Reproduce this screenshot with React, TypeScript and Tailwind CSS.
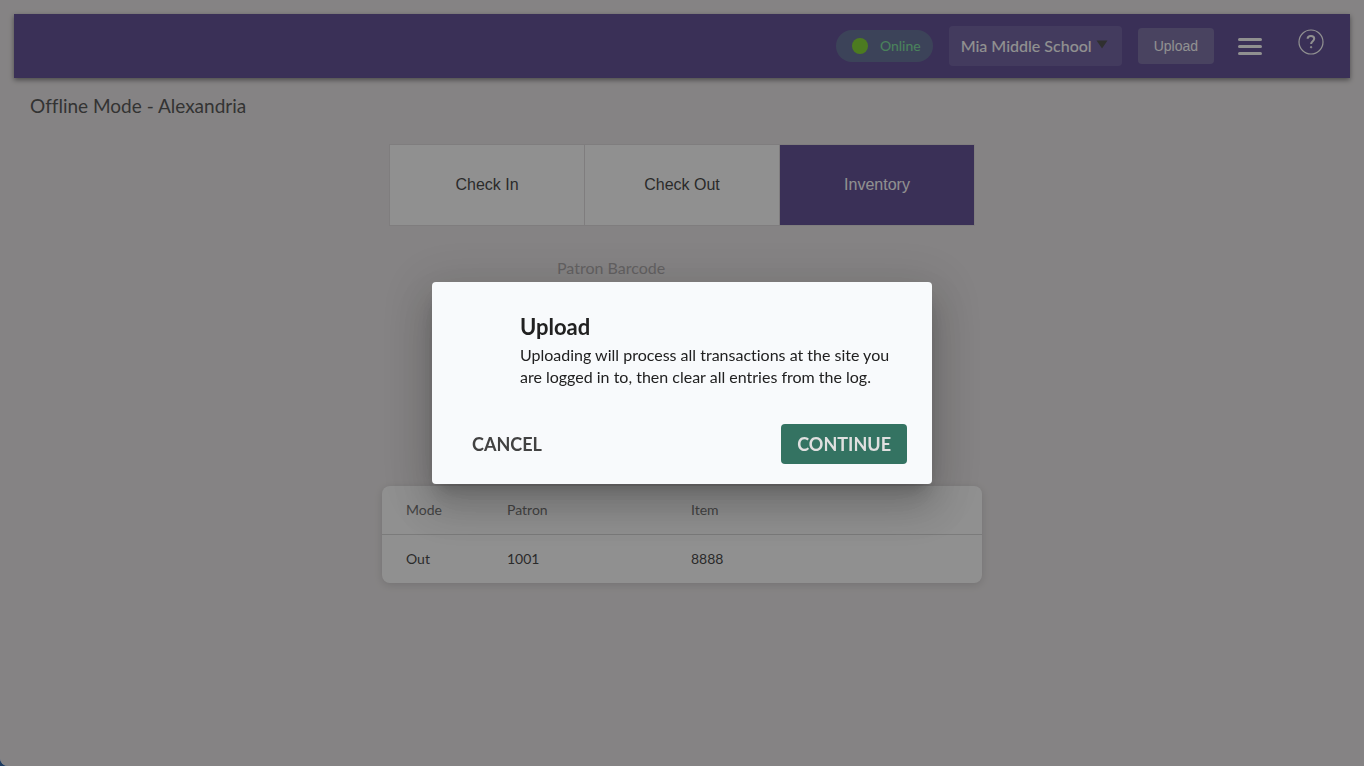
import { useState } from 'react';

interface Transaction {
  mode: string;
  patron: string;
  item: string;
}

const transactions: Transaction[] = [{ mode: 'Out', patron: '1001', item: '8888' }];

const tabs = ['Check In', 'Check Out', 'Inventory'];

function Header() {
  return (
    <header className="flex h-16 items-center justify-end bg-[#533f8d] pr-[26px] text-white shadow-[0_2px_5px_rgba(0,0,0,0.5)]">
      <div className="flex h-8 items-center gap-3 rounded-full bg-[#576590] pr-3 pl-4 text-sm text-[#73e395]">
        <span className="size-4 rounded-full bg-[#77d51f]" />
        <span>Online</span>
      </div>
      <div className="relative ml-4">
        <select
          aria-label="Site"
          className="h-10 appearance-none rounded bg-[#65559b] pr-[29px] pl-3 text-base font-medium text-white"
        >
          <option>Mia Middle School</option>
        </select>
        <svg className="pointer-events-none absolute top-3.5 right-3.5" width="12" height="9" viewBox="0 0 12 9">
          <path d="M0.5 0.5h11L6 8.5z" fill="#3f3f3f" />
        </svg>
      </div>
      <button className="ml-4 h-9 rounded bg-[#71649f] px-4 font-['Liberation_Sans',sans-serif] text-sm font-medium">
        Upload
      </button>
      <button aria-label="Menu" className="ml-6 flex w-6 flex-col gap-1">
        <span className="h-[3px] rounded-sm bg-white" />
        <span className="h-[3px] rounded-sm bg-white" />
        <span className="h-[3px] rounded-sm bg-white" />
      </button>
      <button aria-label="Help" className="ml-9 pb-2">
        <svg width="26" height="26" viewBox="0 0 26 26" fill="none" stroke="currentColor">
          <circle cx="13" cy="13" r="12" strokeWidth="1.2" />
          <path d="M9.6 9.8C9.7 7.9 11 7 12.9 7c2 0 3.3 1.1 3.3 2.7 0 2.4-3.1 2.6-3.1 5.3" strokeWidth="2" />
          <circle cx="13.1" cy="18.2" r="0.7" fill="currentColor" />
        </svg>
      </button>
    </header>
  );
}

function TransactionTable() {
  return (
    <div className="mx-auto w-full max-w-[600px] overflow-hidden rounded-lg bg-white shadow-[0_2px_8px_rgba(0,0,0,0.15)]">
      <table className="w-full table-fixed text-left text-sm">
        <thead>
          <tr className="h-12 border-b border-[#d4d4d4] text-[#666]">
            <th className="w-[101px] pl-6 font-normal">Mode</th>
            <th className="w-[184px] pl-6 font-normal">Patron</th>
            <th className="pl-6 font-normal">Item</th>
          </tr>
        </thead>
        <tbody>
          {transactions.map((t) => (
            <tr key={t.item} className="h-[49px] text-[#333]">
              <td className="pl-6">{t.mode}</td>
              <td className="pl-6">{t.patron}</td>
              <td className="pl-6">{t.item}</td>
            </tr>
          ))}
        </tbody>
      </table>
    </div>
  );
}

function UploadDialog({ onClose }: { onClose: () => void }) {
  return (
    <div className="fixed inset-0 flex items-center justify-center rounded-bl-lg bg-[#212121]/50">
      <div
        role="dialog"
        aria-labelledby="upload-title"
        className="w-full max-w-[500px] rounded bg-[#f8fafc] pt-8 pr-[25px] pb-5 pl-6 text-[#212121] shadow-[0_11px_15px_-7px_rgba(0,0,0,0.2),0_24px_38px_3px_rgba(0,0,0,0.14),0_9px_46px_8px_rgba(0,0,0,0.12)]"
      >
        <div className="pl-16">
          <h2 id="upload-title" className="text-[22px] leading-[26px] font-bold">
            Upload
          </h2>
          <p className="mt-1 text-base leading-[22px]">
            Uploading will process all transactions at the site you are logged in to, then clear all entries from the
            log.
          </p>
        </div>
        <div className="mt-9 flex justify-between">
          <button onClick={onClose} className="h-10 px-4 text-lg font-bold text-[#424242]">
            CANCEL
          </button>
          <button onClick={onClose} className="h-10 rounded bg-[#347362] px-4 text-lg font-bold text-[#e0e0e0]">
            CONTINUE
          </button>
        </div>
      </div>
    </div>
  );
}

export default function App() {
  const [active, setActive] = useState('Inventory');
  const [open, setOpen] = useState(true);

  return (
    <div className="bg-[#1c3a5f] font-['Lato',sans-serif] [font-variant-ligatures:none]">
      <div className="min-h-screen rounded-bl-lg bg-[#e9e5e6] p-3.5">
        <Header />
        <h1 className="mt-4 px-4 text-[19px] leading-6 text-[#444]">Offline Mode - Alexandria</h1>

        <div className="mx-auto mt-[26px] grid w-full max-w-[586px] grid-cols-3 gap-px border border-[#ddd8da] bg-[#ddd8da] font-['Liberation_Sans',sans-serif]">
          {tabs.map((tab) => (
            <button
              key={tab}
              onClick={() => setActive(tab)}
              className={
                tab === active ? 'h-20 bg-[#533f8d] text-base text-white' : 'h-20 bg-white text-base text-[#333]'
              }
            >
              {tab}
            </button>
          ))}
        </div>

        <div className="mx-auto mt-8 flex h-[228px] w-[250px] flex-col">
          <label htmlFor="barcode" className="text-base leading-5 text-[#a5a1a3]">
            Patron Barcode
          </label>
          <input id="barcode" className="mt-2 h-10 rounded bg-white px-3" />
        </div>

        <TransactionTable />
      </div>
      {open && <UploadDialog onClose={() => setOpen(false)} />}
    </div>
  );
}
